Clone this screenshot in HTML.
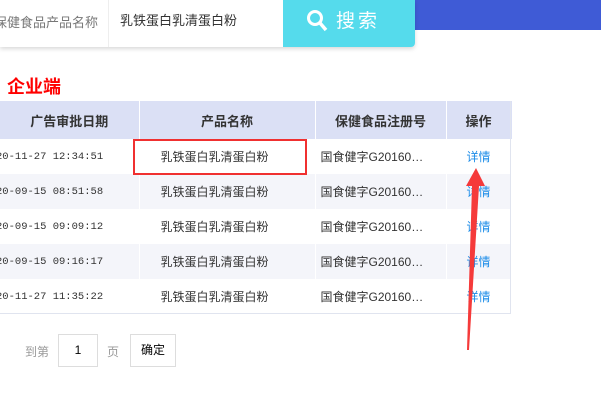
<!DOCTYPE html><html><head><meta charset="utf-8"><style>
body{margin:0;width:601px;height:401px;overflow:hidden;background:#fff;font-family:"Liberation Sans","Noto Sans CJK SC",sans-serif;position:relative}
.a{position:absolute}
.sb{left:0;top:0;width:415px;height:47px;background:#fff;box-shadow:0 2px 4px rgba(0,0,0,.15);border-radius:0 0 4px 0}
table{position:absolute;left:0;top:101px;border-collapse:collapse;font-size:12px;color:#333;table-layout:fixed;width:511px}
td,th{height:35px;padding:0;text-align:center;border-right:1px solid #fff;white-space:nowrap;overflow:hidden}
th{background:#dbe0f5;height:38px;font-weight:bold;font-size:13px}
tr.g td{background:#f4f5fa}
td.d{font-family:"Liberation Mono","Noto Sans CJK SC",monospace;font-size:10.5px;text-align:left;color:#333;text-indent:-4px}
td.p{text-align:left;padding-left:21px}
td.r{text-align:left;padding-left:5px}
td.l{color:#1b8ce8}
</style></head><body>
<div class="a" style="left:415px;top:0;width:186px;height:30px;background:#3f5bd6"></div>
<div class="a sb"></div>
<div class="a" style="top:12px;font-size:13px;color:#777;left:-6px">保健食品产品名称</div>
<div class="a" style="left:108px;top:0;width:1px;height:47px;background:#eee"></div>
<div class="a" style="left:120px;top:10px;font-size:13px;color:#333">乳铁蛋白乳清蛋白粉</div>
<div class="a" style="left:283px;top:0;width:132px;height:47px;background:#55dbec;border-radius:0 0 4px 0"></div>
<svg class="a" style="left:306px;top:9px" width="22" height="24"><circle cx="9" cy="9" r="6.5" stroke="#fff" stroke-width="3" fill="none"/><line x1="14" y1="14" x2="20" y2="21" stroke="#fff" stroke-width="3.5"/></svg>
<div class="a" style="left:336px;top:6px;font-size:19px;color:#fff;letter-spacing:3px">搜索</div>
<div class="a" style="left:7px;top:73px;font-size:18px;font-weight:bold;color:#f00">企业端</div>
<table>
<colgroup><col style="width:139px"><col style="width:176px"><col style="width:131px"><col style="width:65px"></colgroup>
<tr><th>广告审批日期</th><th>产品名称</th><th>保健食品注册号</th><th style="border-right:1px solid #dbe0f5">操作</th></tr>
<tr><td class="d">20-11-27 12:34:51</td><td class="p">乳铁蛋白乳清蛋白粉</td><td class="r">国食健字G20160…</td><td class="l">详情</td></tr>
<tr class="g"><td class="d">20-09-15 08:51:58</td><td class="p">乳铁蛋白乳清蛋白粉</td><td class="r">国食健字G20160…</td><td class="l">详情</td></tr>
<tr><td class="d">20-09-15 09:09:12</td><td class="p">乳铁蛋白乳清蛋白粉</td><td class="r">国食健字G20160…</td><td class="l">详情</td></tr>
<tr class="g"><td class="d">20-09-15 09:16:17</td><td class="p">乳铁蛋白乳清蛋白粉</td><td class="r">国食健字G20160…</td><td class="l">详情</td></tr>
<tr><td class="d">20-11-27 11:35:22</td><td class="p">乳铁蛋白乳清蛋白粉</td><td class="r">国食健字G20160…</td><td class="l">详情</td></tr>
</table>
<div class="a" style="left:0;top:313px;width:511px;height:1px;background:#e0e4ef"></div>
<div class="a" style="left:510px;top:101px;width:1px;height:213px;background:#e0e4ef"></div>
<div class="a" style="left:133px;top:139px;width:170px;height:32px;border:2px solid #f03030"></div>
<svg class="a" style="left:0;top:0" width="601" height="401"><polygon points="476,168 485,186 479,186 469,350 467,350 472,186 466,186" fill="#f53a3a"/></svg>
<div class="a" style="left:25px;top:343px;font-size:12px;color:#999">到第</div>
<div class="a" style="left:58px;top:334px;width:38px;height:31px;border:1px solid #ddd;text-align:center;line-height:31px;font-size:12px">1</div>
<div class="a" style="left:107px;top:343px;font-size:12px;color:#999">页</div>
<div class="a" style="left:130px;top:334px;width:44px;height:31px;border:1px solid #ddd;text-align:center;line-height:31px;font-size:12px">确定</div>
</body></html>
